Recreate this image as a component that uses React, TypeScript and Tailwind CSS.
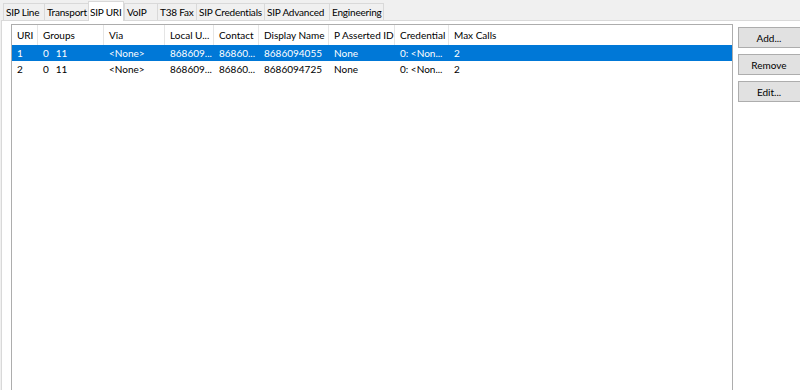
import React from 'react';

const TABS = [
  { label: 'SIP Line', w: 'w-[41px]' },
  { label: 'Transport', w: 'w-[44px]' },
  { label: 'SIP URI', w: 'w-[36px]' },
  { label: 'VoIP', w: 'w-[33px]' },
  { label: 'T38 Fax', w: 'w-[39px]' },
  { label: 'SIP Credentials', w: 'w-[68px]' },
  { label: 'SIP Advanced', w: 'w-[65px]' },
  { label: 'Engineering', w: 'w-[55px]' },
];

const COLUMNS = [
  { label: 'URI', w: 'w-[26px]' },
  { label: 'Groups', w: 'w-[66px]' },
  { label: 'Via', w: 'w-[61px]' },
  { label: 'Local U...', w: 'w-[49px]' },
  { label: 'Contact', w: 'w-[45px]' },
  { label: 'Display Name', w: 'w-[70px]' },
  { label: 'P Asserted ID', w: 'w-[66px]' },
  { label: 'Credential', w: 'w-[54px]' },
  { label: 'Max Calls', w: 'w-[80px]' },
];

const ROWS = [
  ['1', 'g', '<None>', '868609...', '86860...', '8686094055', 'None', '0: <Non...', '2'],
  ['2', 'g', '<None>', '868609...', '86860...', '8686094725', 'None', '0: <Non...', '2'],
];

export default function App() {
  return (
    <div
      className="w-[800px] h-[390px] overflow-hidden bg-[#f0f0f0] flex flex-col text-[10px] text-black"
      style={{ fontFamily: 'Lato, "Noto Sans", sans-serif' }}
    >
      {/* tab strip */}
      <div className="h-[20px] flex items-end pl-[3px] shrink-0">
        {TABS.map((t) => {
          const active = t.label === 'SIP URI';
          return (
            <div
              key={t.label}
              className={
                active
                  ? `${t.w} shrink-0 whitespace-nowrap h-[20px] -mb-px relative z-10 bg-white border-x border-t border-[#d9d9d9] flex items-center pl-[1px] leading-none tracking-[-0.2px]`
                  : `${t.w} shrink-0 whitespace-nowrap h-[17px] bg-[#f0f0f0] border-l border-t border-[#d9d9d9] last:border-r flex items-center pl-[2px] leading-none tracking-[-0.2px]`
              }
            >
              {t.label}
            </div>
          );
        })}
      </div>

      {/* tab page */}
      <div className="flex-1 ml-[1px] w-[820px] bg-white border-t border-l border-[#d9d9d9] flex pt-[3px] pl-[9px] gap-[5px]">
        {/* list view */}
        <div className="w-[722px] h-[400px] border border-[#adadad] bg-white flex flex-col">
          <div className="h-[20px] flex items-stretch">
            {COLUMNS.map((c, i) => (
              <div
                key={c.label}
                className={`${c.w} shrink-0 overflow-hidden flex items-center pl-[5px] whitespace-nowrap ${i < COLUMNS.length - 1 ? 'border-r border-[#e5e5e5]' : ''}`}
              >
                {c.label}
              </div>
            ))}
          </div>
          {ROWS.map((r, ri) => (
            <div
              key={ri}
              className={`h-[16px] flex items-center ${ri === 0 ? 'bg-[#0078d7] text-white' : ''}`}
            >
              {r.map((cell, ci) => (
                <div key={ci} className={`${COLUMNS[ci].w} shrink-0 overflow-hidden pl-[5px] whitespace-nowrap ${ci < COLUMNS.length - 1 ? 'border-r border-transparent' : ''}`}>
                  {cell === 'g' ? (
                    <span>
                      0<span className="ml-[7px]">11</span>
                    </span>
                  ) : (
                    cell
                  )}
                </div>
              ))}
            </div>
          ))}
        </div>

        {/* buttons */}
        <div className="flex flex-col gap-[6px] pt-[3px]">
          {['Add...', 'Remove', 'Edit...'].map((b) => (
            <button
              key={b}
              className="w-[75px] h-[21px] bg-[#e1e1e1] border border-[#adadad] flex items-center justify-center pr-[13px] leading-none"
            >
              {b}
            </button>
          ))}
        </div>
      </div>
    </div>
  );
}
